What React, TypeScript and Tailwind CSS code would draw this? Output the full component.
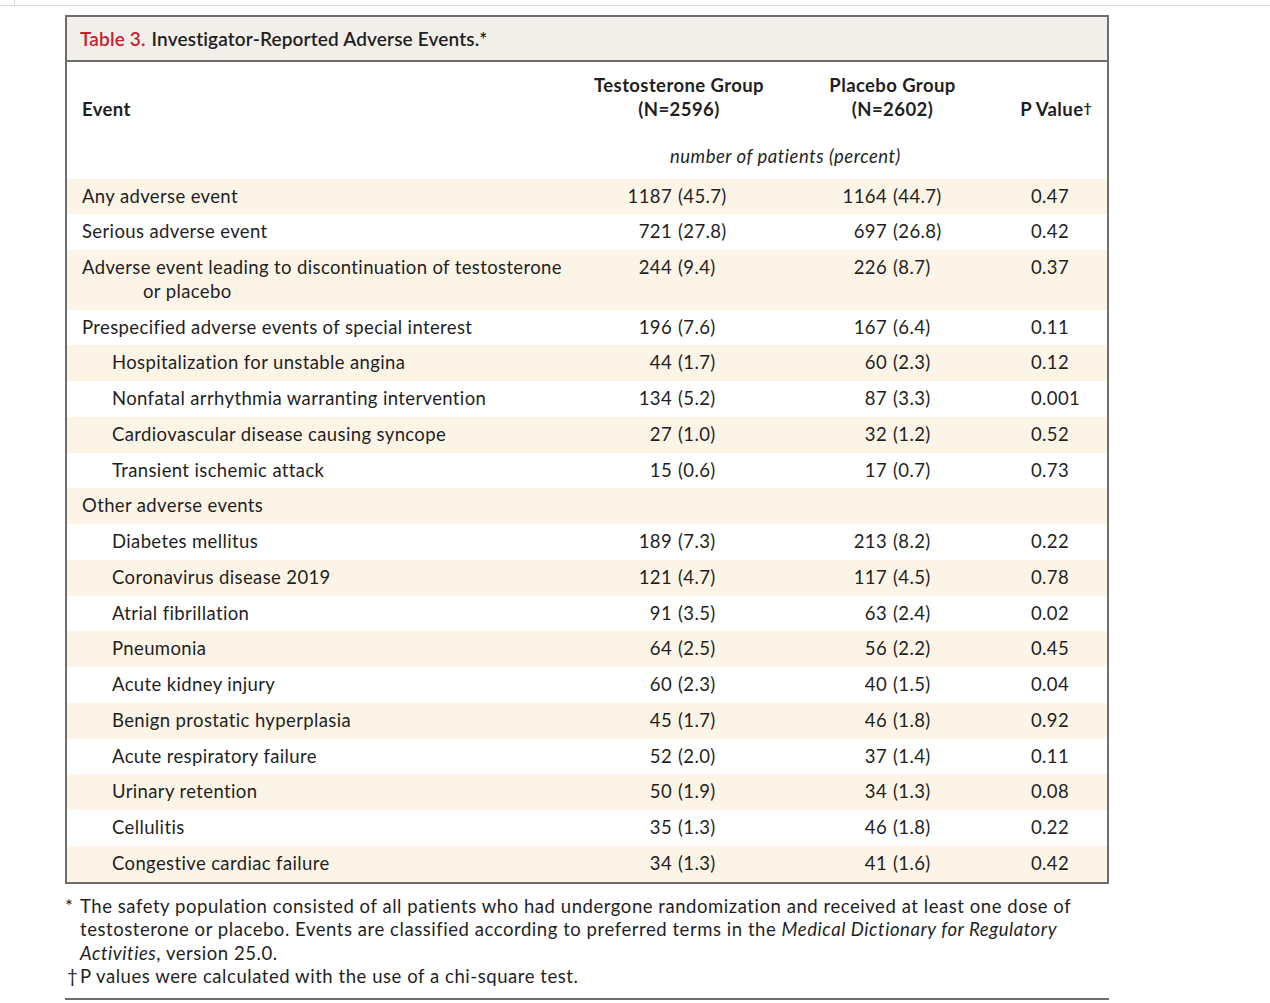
import React from 'react';

type Row = {
  label: string[];
  t?: [string, string];
  pl?: [string, string];
  p?: string;
  sub?: boolean;
};

const rows: Row[] = [
  { label: ['Any adverse event'], t: ['1187', '(45.7)'], pl: ['1164', '(44.7)'], p: '0.47' },
  { label: ['Serious adverse event'], t: ['721', '(27.8)'], pl: ['697', '(26.8)'], p: '0.42' },
  { label: ['Adverse event leading to discontinuation of testosterone', 'or placebo'], t: ['244', '(9.4)'], pl: ['226', '(8.7)'], p: '0.37' },
  { label: ['Prespecified adverse events of special interest'], t: ['196', '(7.6)'], pl: ['167', '(6.4)'], p: '0.11' },
  { label: ['Hospitalization for unstable angina'], t: ['44', '(1.7)'], pl: ['60', '(2.3)'], p: '0.12', sub: true },
  { label: ['Nonfatal arrhythmia warranting intervention'], t: ['134', '(5.2)'], pl: ['87', '(3.3)'], p: '0.001', sub: true },
  { label: ['Cardiovascular disease causing syncope'], t: ['27', '(1.0)'], pl: ['32', '(1.2)'], p: '0.52', sub: true },
  { label: ['Transient ischemic attack'], t: ['15', '(0.6)'], pl: ['17', '(0.7)'], p: '0.73', sub: true },
  { label: ['Other adverse events'] },
  { label: ['Diabetes mellitus'], t: ['189', '(7.3)'], pl: ['213', '(8.2)'], p: '0.22', sub: true },
  { label: ['Coronavirus disease 2019'], t: ['121', '(4.7)'], pl: ['117', '(4.5)'], p: '0.78', sub: true },
  { label: ['Atrial fibrillation'], t: ['91', '(3.5)'], pl: ['63', '(2.4)'], p: '0.02', sub: true },
  { label: ['Pneumonia'], t: ['64', '(2.5)'], pl: ['56', '(2.2)'], p: '0.45', sub: true },
  { label: ['Acute kidney injury'], t: ['60', '(2.3)'], pl: ['40', '(1.5)'], p: '0.04', sub: true },
  { label: ['Benign prostatic hyperplasia'], t: ['45', '(1.7)'], pl: ['46', '(1.8)'], p: '0.92', sub: true },
  { label: ['Acute respiratory failure'], t: ['52', '(2.0)'], pl: ['37', '(1.4)'], p: '0.11', sub: true },
  { label: ['Urinary retention'], t: ['50', '(1.9)'], pl: ['34', '(1.3)'], p: '0.08', sub: true },
  { label: ['Cellulitis'], t: ['35', '(1.3)'], pl: ['46', '(1.8)'], p: '0.22', sub: true },
  { label: ['Congestive cardiac failure'], t: ['34', '(1.3)'], pl: ['41', '(1.6)'], p: '0.42', sub: true },
];

const font = { fontFamily: 'Lato, "Open Sans", sans-serif' };

export default function App() {
  return (
    <div className="min-h-[1003px] bg-white text-[#1f1f1f]" style={font}>
      {/* thin tab strip at the very top */}
      <div className="h-[6px] border-b border-[#dcdcdc]">
        <div className="h-full w-[15px] border-r border-[#dcdcdc]" />
      </div>

      <div className="pl-[65px] pt-[9px]">
        <div className="w-[1044px] border-2 border-[#6e6e6e]">
          {/* title bar */}
          <div className="h-[45px] bg-[#f2efea] border-b-2 border-[#6e6e6e] pl-[13px] pt-[1px] flex items-center text-[19px] font-semibold tracking-[0.15px]">
            <span className="text-[#c8202f]">Table 3.</span>
            <span className="ml-[6px]">Investigator-Reported Adverse Events.*</span>
          </div>

          {/* column headings */}
          <div className="pt-[12px] text-[18.5px] leading-[23.5px]">
            <div className="flex items-end font-bold tracking-[0.4px]">
              <div className="w-[523px] pl-[15px]">Event</div>
              <div className="w-[178px] text-center">
                <div>Testosterone Group</div>
                <div>(N=2596)</div>
              </div>
              <div className="w-[37px]" />
              <div className="w-[175px] text-center">
                <div>Placebo Group</div>
                <div>(N=2602)</div>
              </div>
              <div className="flex-1 text-right pr-[15px]">
                P Value<span className="text-[14px] align-[3px]">†</span>
              </div>
            </div>
            <div className="pl-[603px] pt-[24px] pb-[10px] italic tracking-[0.5px]">number of patients (percent)</div>
          </div>

          {/* body rows */}
          <div className="text-[18.5px] leading-[23.75px] tracking-[0.37px]">
            {rows.map((r, i) => (
              <div key={i} className={`flex items-start py-[6px] ${i % 2 === 0 ? 'bg-[#fcf5e7]' : 'bg-white'}`}>
                <div className={`w-[523px] ${r.sub ? 'pl-[45px]' : 'pl-[15px]'}`}>
                  {r.label.map((l, j) => (
                    <div key={j} className={j > 0 ? 'pl-[61px]' : ''}>{l}</div>
                  ))}
                </div>
                <div className="w-[82px] text-right">{r.t?.[0]}</div>
                <div className="w-[133px] pl-[6px]">{r.t?.[1]}</div>
                <div className="w-[82px] text-right">{r.pl?.[0]}</div>
                <div className="w-[144px] pl-[6px]">{r.pl?.[1]}</div>
                <div className="flex-1">{r.p}</div>
              </div>
            ))}
          </div>
        </div>

        {/* footnotes */}
        <div className="w-[1044px] pt-[11px] pb-[9px] text-[18.5px] leading-[23.5px] tracking-[0.55px] border-b-2 border-[#6e6e6e]">
          <div className="flex">
            <span className="w-[15px]">*</span>
            <p className="flex-1">
              The safety population consisted of all patients who had undergone randomization and received at least one dose of
              testosterone or placebo. Events are classified according to preferred terms in the{' '}
              <i>Medical Dictionary for Regulatory Activities</i>, version 25.0.
            </p>
          </div>
          <div className="flex">
            <span className="w-[15px] pl-[2px]">†</span>
            <p className="flex-1">P values were calculated with the use of a chi-square test.</p>
          </div>
        </div>
      </div>
    </div>
  );
}
